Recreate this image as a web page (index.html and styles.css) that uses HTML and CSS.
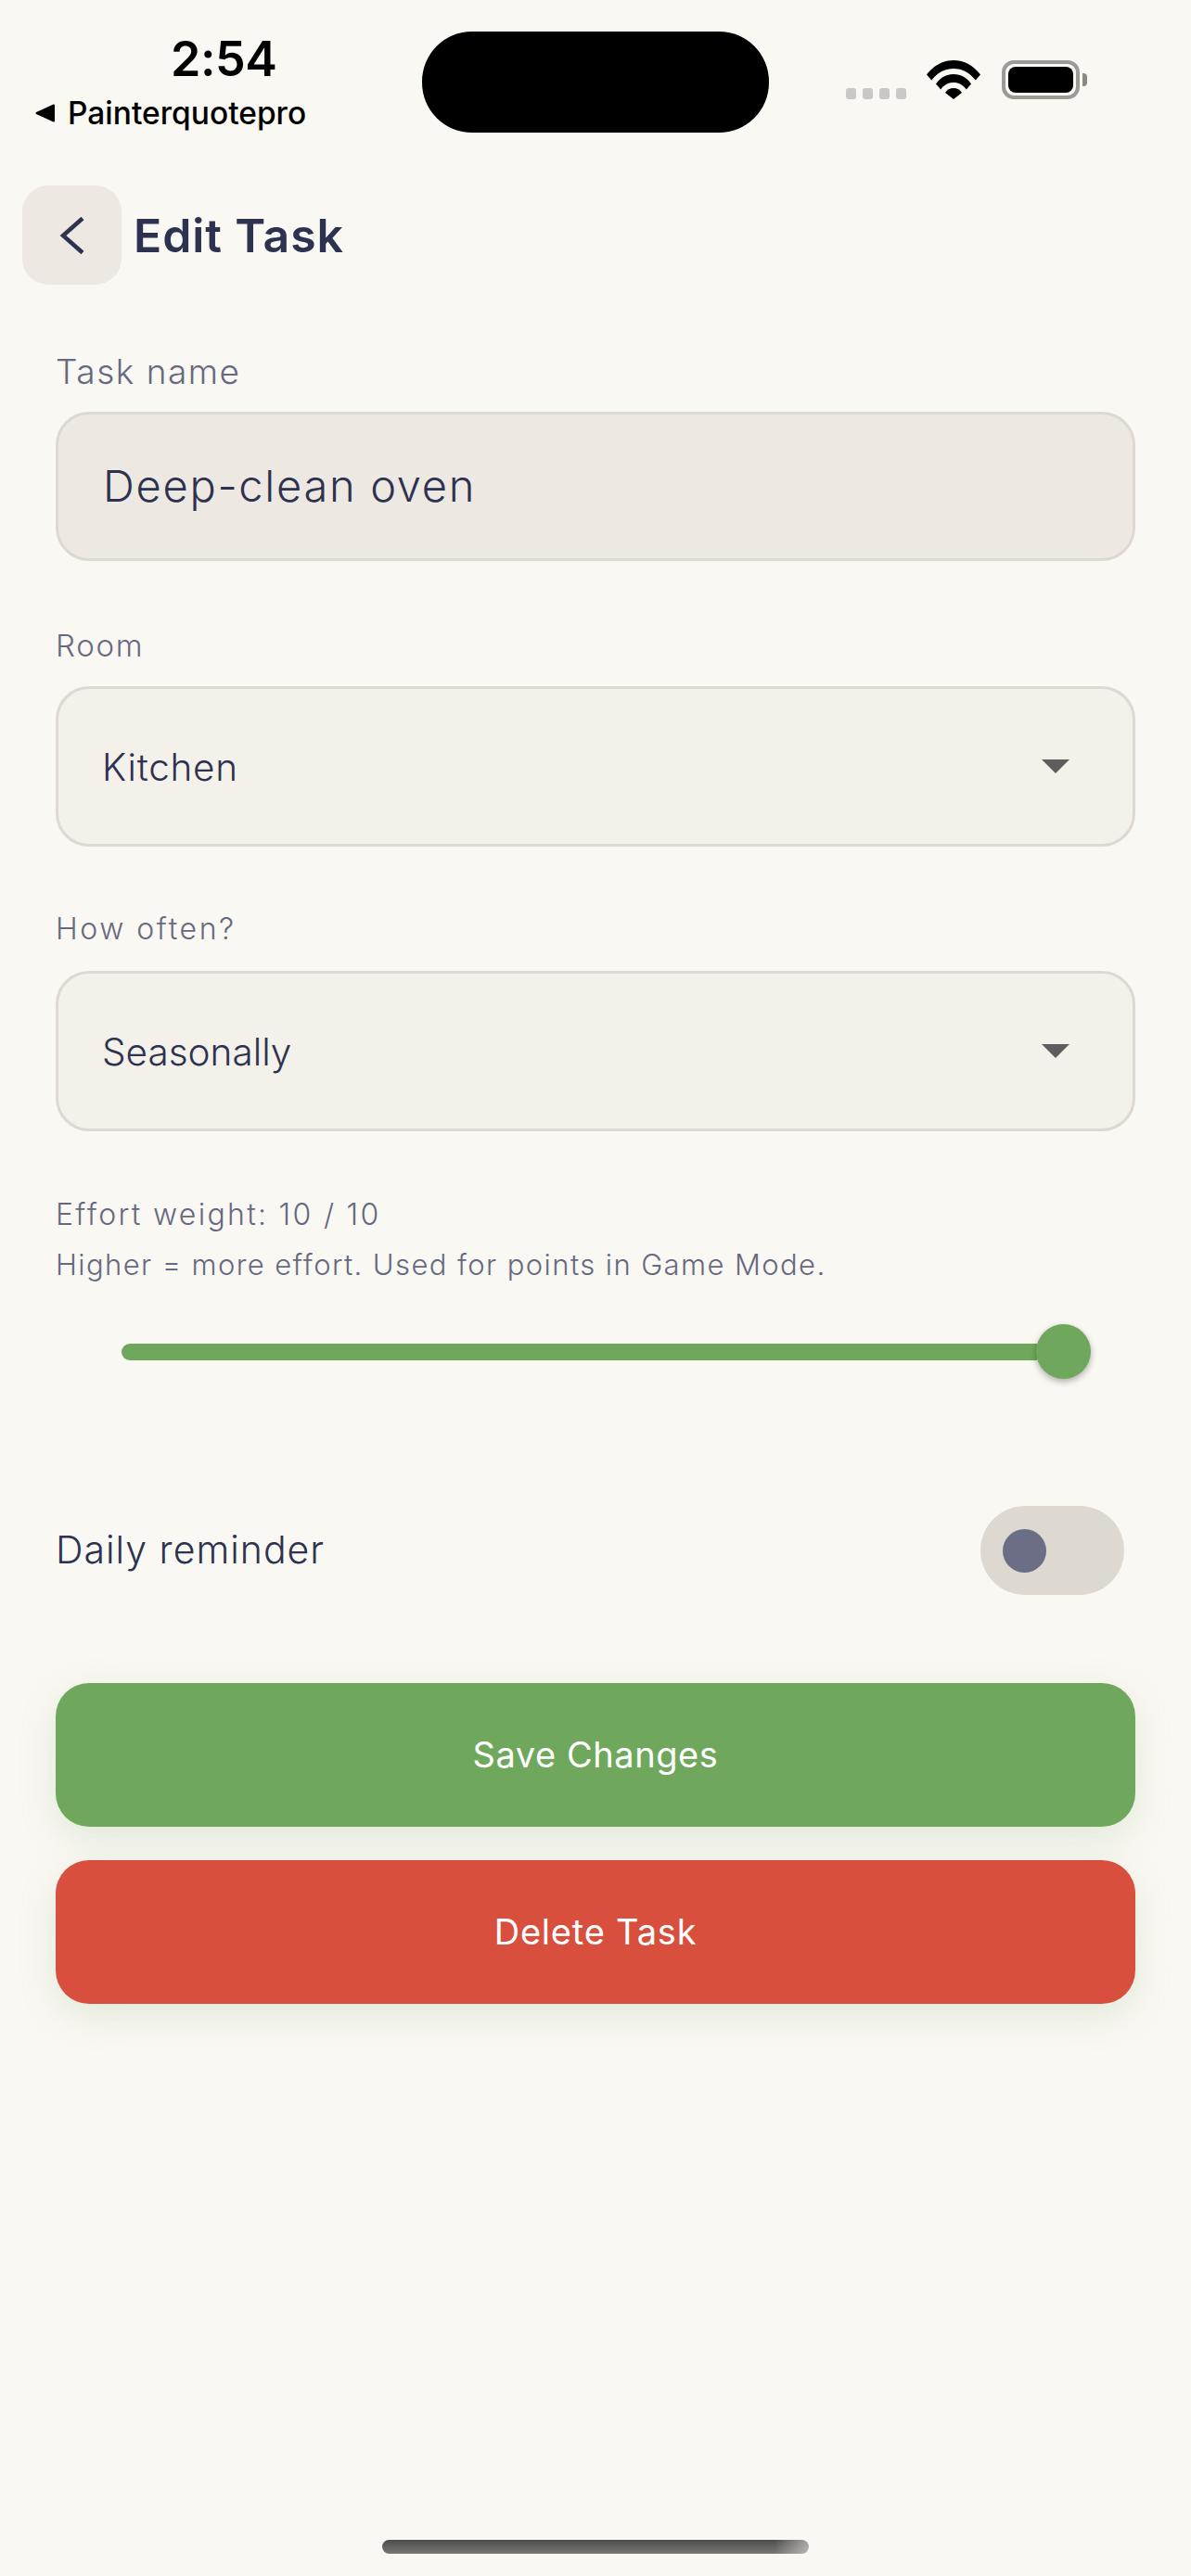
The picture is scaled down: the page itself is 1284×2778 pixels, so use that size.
FILE: index.html
```html
<!DOCTYPE html>
<html lang="en">
<head>
<meta charset="utf-8">
<title>Edit Task</title>
<link rel="stylesheet" href="styles.css">
</head>
<body>
<div class="screen">
  <div class="status">
    <div class="status-left">
      <div class="time">2:54</div>
      <div class="app"><svg class="app-arrow" width="21" height="20" viewBox="0 0 21 20"><path d="M20 1.500V18.500L1.500 10z" fill="#000" stroke="#000" stroke-width="2" stroke-linejoin="round"/></svg><span>Painterquotepro</span></div>
    </div>
    <div class="island"></div>
    <div class="status-right">
      <div class="dots"><i></i><i></i><i></i><i></i></div>
      <svg class="wifi" width="58" height="42" viewBox="0 0 58 42">
        <path d="M0 15.500C7.500 5.800 17.500 0 29 0s21.500 5.800 29 15.500l-5.200 6C46.500 13.500 38.500 9 29 9S11.500 13.500 5.200 21.500z" fill="#000"/>
        <path d="M10 25.500C14.500 18.800 21 15 29 15s14.500 3.800 19 10.500l-5.200 6C39.300 26.500 34.800 24 29 24s-10.300 2.500-13.800 7.500z" fill="#000"/>
        <path d="M20 35c2.200-3.200 5.200-5 9-5s6.800 1.800 9 5l-9 7z" fill="#000"/>
      </svg>
      <div class="battery"><div class="battery-body"><div class="battery-fill"></div></div><div class="battery-cap"></div></div>
    </div>
  </div>

  <header class="header">
    <div class="back"><svg width="28" height="42" viewBox="0 0 28 42"><path d="M25 2.500 4 21l21 18.500" fill="none" stroke="#2D3250" stroke-width="4.500"/></svg></div>
    <h1 class="title">Edit Task</h1>
  </header>

  <main class="form">
    <div class="label label-name">Task name</div>
    <div class="input"><span class="lift">Deep-clean oven</span></div>

    <div class="label label-room">Room</div>
    <div class="select"><span class="select-text room-text">Kitchen</span><i class="caret"></i></div>

    <div class="label label-often">How often?</div>
    <div class="select select-often"><span class="select-text">Seasonally</span><i class="caret"></i></div>

    <div class="label label-effort">Effort weight: 10 / 10</div>
    <div class="label label-hint">Higher = more effort. Used for points in Game Mode.</div>
    <div class="slider"><div class="track"></div><div class="thumb"></div></div>

    <div class="reminder">
      <span class="lift">Daily reminder</span>
      <div class="toggle"><div class="knob"></div></div>
    </div>

    <div class="btn btn-save">Save Changes</div>
    <div class="btn btn-delete">Delete Task</div>
  </main>

  <div class="home"></div>
</div>
</body>
</html>
```

FILE: styles.css
```css
* { box-sizing: border-box; }
html, body { margin: 0; padding: 0; }
body { background: #FAF8F3; font-family: "Inter", "Liberation Sans", sans-serif; color: #2D3250; }
.screen { height: 2778px; display: flex; flex-direction: column; overflow: hidden; }
.lift { padding-bottom: 3px; }

.status { height: 200px; display: flex; align-items: flex-start; padding-top: 34px; }
.status-left { width: 455px; padding: 8px 0 0 38px; color: #000; font-family: "Inter", sans-serif; }
.time { margin-left: 146px; font-size: 52px; line-height: 44px; font-weight: 600; letter-spacing: -0.5px; }
.app { display: flex; align-items: center; gap: 14px; margin-top: 18px; font-size: 33.500px; line-height: 36px; font-weight: 460; }
.app-arrow { flex: none; }
.island { width: 374px; height: 109px; background: #000; border-radius: 54px; flex: none; }
.status-right { display: flex; align-items: flex-start; margin-left: 83px; padding-top: 31px; }
.dots { display: flex; gap: 7px; margin-top: 30px; }
.dots i { display: block; width: 11px; height: 12px; border-radius: 3px; background: #C9C8C4; }
.wifi { margin-left: 22px; }
.battery { display: flex; align-items: center; margin-left: 23px; }
.battery-body { width: 84px; height: 42px; border: 4px solid #9B9A96; border-radius: 13px; padding: 3px; }
.battery-fill { height: 100%; background: #000; border-radius: 8px; }
.battery-cap { width: 5px; height: 14px; margin-left: 3px; background: #8A8986; border-radius: 0 4px 4px 0; }

.header { display: flex; align-items: center; gap: 13px; height: 107px; padding-left: 24px; }
.back { width: 107px; height: 107px; border-radius: 28px; background: #EDE9E2; display: flex; align-items: center; justify-content: center; }
.title { margin: 0; font-size: 50px; line-height: 60px; font-weight: 560; letter-spacing: 0.9px; }

.form { padding: 0 60px; display: flex; flex-direction: column; font-weight: 350; }
.label { line-height: 40px; color: #666980; }
.label-name { margin-top: 74px; font-size: 37px; letter-spacing: 1.5px; }
.label-room { margin-top: 71px; font-size: 33px; letter-spacing: 1.7px; }
.label-often { margin-top: 69px; font-size: 32px; letter-spacing: 2.55px; }
.label-effort { margin-top: 70px; font-size: 32px; letter-spacing: 2.3px; }
.label-hint { margin-top: 14px; font-size: 31px; letter-spacing: 1.4px; }

.input { margin-top: 23px; height: 161px; display: flex; align-items: center; padding-left: 48px; background: #EDE9E2; border: 3px solid #DDD9D0; border-radius: 36px; font-size: 47px; letter-spacing: 1.7px; }
.select { margin-top: 24px; height: 173px; display: flex; align-items: center; justify-content: space-between; padding: 0 68px 0 47px; background: #F4F1EA; border: 3px solid #DDD9D0; border-radius: 36px; font-size: 40.500px; }
.select-often { margin-top: 25px; }
.select-text { padding-top: 1px; }
.room-text { letter-spacing: 0.7px; }
.caret { display: block; width: 0; height: 0; border-left: 15px solid transparent; border-right: 15px solid transparent; border-top: 15px solid #5E5E5E; }

.slider { display: flex; align-items: center; margin: 44px 0 0 71px; width: 1045px; }
.track { flex: 1; height: 18px; background: #6FA85C; border-radius: 9px 0 0 9px; }
.thumb { width: 59px; height: 59px; border-radius: 50%; background: #6FA85C; box-shadow: 0 3px 7px rgba(0, 0, 0, 0.3); flex: none; margin-left: -1px; }

.reminder { margin-top: 137px; display: flex; align-items: center; justify-content: space-between; padding-right: 12px; font-size: 41px; letter-spacing: 1px; }
.toggle { width: 155px; height: 96px; border-radius: 48px; background: #DDD9D0; display: flex; align-items: center; padding-left: 24px; }
.knob { width: 47px; height: 47px; border-radius: 50%; background: #6B6E85; }

.btn { height: 155px; padding-bottom: 2px; border-radius: 36px; display: flex; align-items: center; justify-content: center; color: #fff; font-size: 38px; letter-spacing: 0.55px; font-weight: 380; box-shadow: 0 12px 40px rgba(111, 168, 92, 0.18); }
.btn-save { margin-top: 95px; background: #6FA85C; }
.btn-delete { margin-top: 36px; background: #D94F3D; letter-spacing: 0.8px; }

.home { margin: auto auto 24px; width: 460px; height: 15px; border-radius: 8px; background: linear-gradient(to right, rgba(250, 248, 243, 0) 92%, rgba(250, 248, 243, 0.5) 100%), linear-gradient(to bottom, #4D4D4B, #777774); }
```
